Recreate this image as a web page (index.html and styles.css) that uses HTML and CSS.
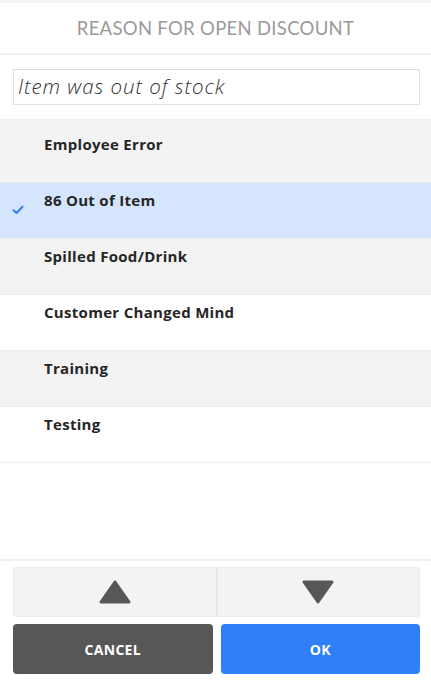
FILE: index.html
```html
<!DOCTYPE html>
<html>
<head>
<meta charset="utf-8">
<link rel="stylesheet" href="styles.css">
</head>
<body>
<div class="dialog">
  <div class="header">REASON FOR OPEN DISCOUNT</div>
  <div class="input-area">
    <div class="input">Item was out of stock</div>
  </div>
  <div class="list">
    <div class="row odd"><span class="check"></span><span class="label">Employee Error</span></div>
    <div class="row selected"><span class="check"><svg width="12" height="10" viewBox="0 0 12 10"><path d="M1.5 5.2 L4.5 8 L10.5 1.8" fill="none" stroke="#2f7ff8" stroke-width="2" stroke-linecap="round" stroke-linejoin="round"/></svg></span><span class="label">86 Out of Item</span></div>
    <div class="row odd"><span class="check"></span><span class="label">Spilled Food/Drink</span></div>
    <div class="row"><span class="check"></span><span class="label">Customer Changed Mind</span></div>
    <div class="row odd"><span class="check"></span><span class="label">Training</span></div>
    <div class="row"><span class="check"></span><span class="label">Testing</span></div>
    <div class="filler"></div>
  </div>
  <div class="footer">
    <div class="pager">
      <div class="page-btn"><svg width="32" height="24" viewBox="0 0 32 24"><path d="M16 2 L30 22 L2 22 Z" fill="#575757" stroke="#575757" stroke-width="3" stroke-linejoin="round"/></svg></div>
      <div class="page-btn"><svg width="32" height="24" viewBox="0 0 32 24"><path d="M2 2 L30 2 L16 22 Z" fill="#575757" stroke="#575757" stroke-width="3" stroke-linejoin="round"/></svg></div>
    </div>
    <div class="actions">
      <div class="btn cancel">CANCEL</div>
      <div class="btn ok">OK</div>
    </div>
  </div>
</div>
</body>
</html>
```
FILE: styles.css
```css
html, body {
  margin: 0;
  padding: 0;
  background: #ffffff;
}
body {
  font-family: "Open Sans", "Lato", sans-serif;
  width: 431px;
  height: 681px;
  overflow: hidden;
}
.dialog {
  border-top: 3px solid #f4f4f4;
  display: flex;
  flex-direction: column;
  height: 678px;
}
.header {
  display: flex;
  align-items: center;
  justify-content: center;
  color: #9a9a9a;
  font-family: "Lato", sans-serif;
  font-size: 18.5px;
  font-weight: 400;
  letter-spacing: 0.3px;
  border-bottom: 2px solid #f1f1f1;
  box-sizing: border-box;
  height: 52px;
}
.input-area {
  padding: 14px 11px 14px 13px;
  border-bottom: 2px solid #f1f1f1;
}
.input {
  height: 36px;
  box-sizing: border-box;
  border: 1px solid #e2e2e2;
  border-top-color: #dcdcdc;
  font-style: italic;
  font-weight: 300;
  font-size: 20.5px;
  letter-spacing: 0.95px;
  color: #333333;
  padding-left: 4px;
  line-height: 33px;
}
.list {
  border-top: 6px solid #f4f4f4;
  display: flex;
  flex-direction: column;
}
.row {
  height: 55px;
  border-bottom: 1px solid #ececec;
  display: flex;
  align-items: flex-start;
  background: #ffffff;
}
.row.odd { background: #f3f3f3; }
.row.selected { background: #d5e5fd; }
.check {
  width: 44px;
  padding-left: 12px;
  box-sizing: border-box;
  padding-top: 22px;
  height: 55px;
}
.check svg {
  display: block;
}
.label {
  font-weight: 700;
  font-size: 15px;
  letter-spacing: 0.3px;
  color: #262626;
  padding-top: 7px;
}
.filler {
  height: 96px;
  border-bottom: 2px solid #f1f1f1;
}
.footer {
  padding: 6px 11px 0 13px;
  display: flex;
  flex-direction: column;
  gap: 7px;
}
.pager {
  display: flex;
  height: 50px;
  border: 1px solid #ebebeb;
  border-radius: 3px;
  background: #f3f3f3;
  box-sizing: border-box;
}
.page-btn {
  flex: 1;
  display: flex;
  align-items: center;
  justify-content: center;
}
.page-btn + .page-btn {
  border-left: 2px solid #e8e8e8;
}
.actions {
  display: flex;
  gap: 8px;
  height: 50px;
}
.btn {
  flex: 1;
  border-radius: 4px;
  display: flex;
  align-items: center;
  justify-content: center;
  color: #ffffff;
  font-weight: 700;
  font-size: 14px;
  letter-spacing: 0.3px;
}
.cancel { background: #575757; }
.ok { background: #2f7ff8; }
```
